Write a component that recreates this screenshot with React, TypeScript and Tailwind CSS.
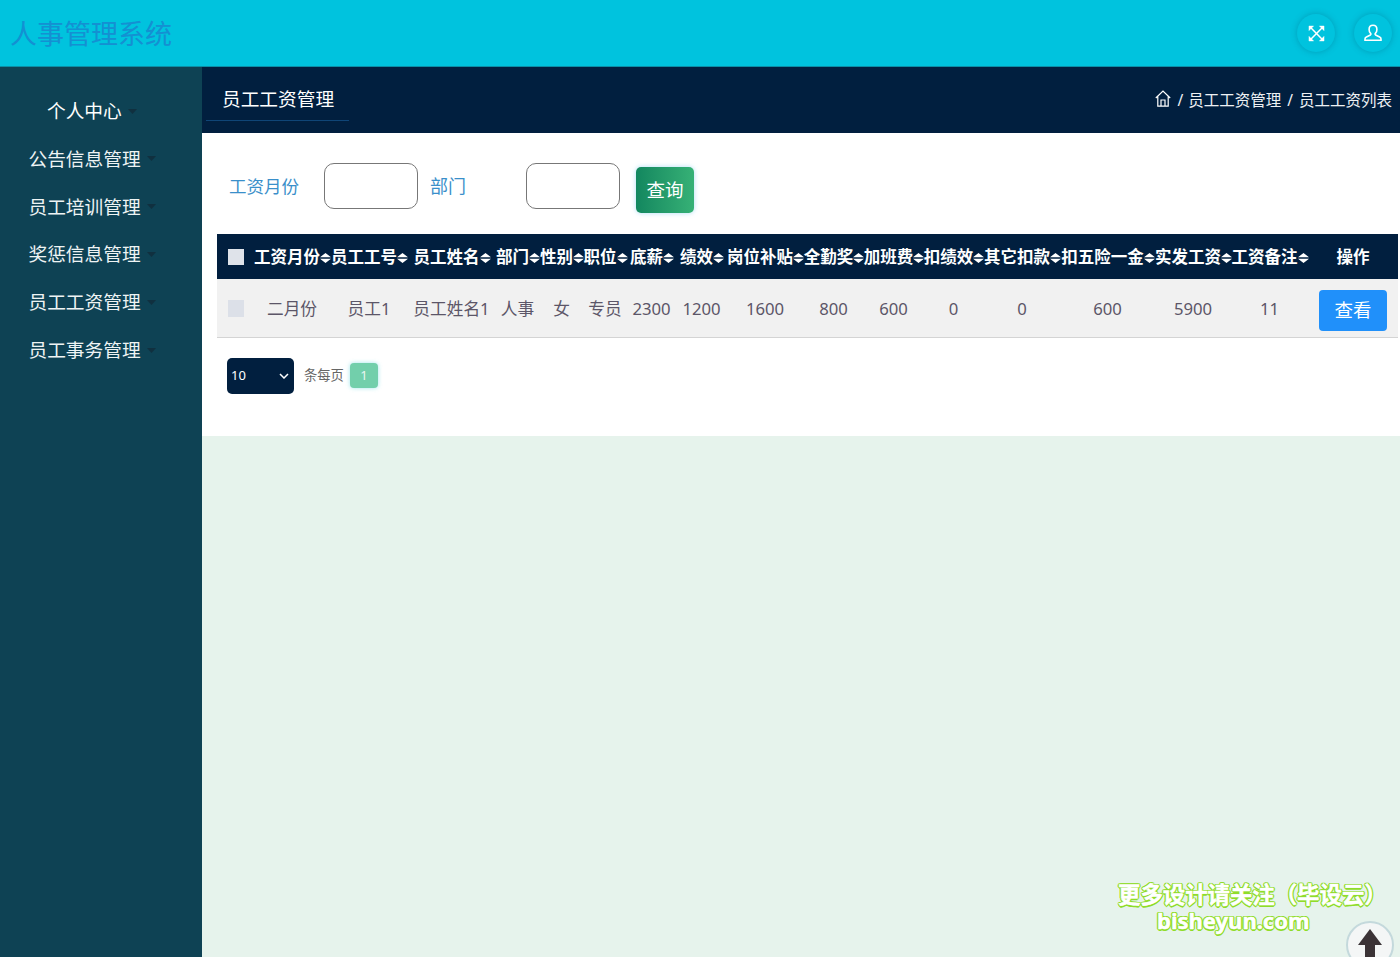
import type { ReactNode } from "react";

const font = "font-['Noto_Sans','Noto_Sans_CJK_SC',sans-serif]";

const menu = ["公告信息管理", "员工培训管理", "奖惩信息管理", "员工工资管理", "员工事务管理"];

const columns: { label: string; width: string; value: string }[] = [
  { label: "工资月份", width: "w-[77px]", value: "二月份" },
  { label: "员工工号", width: "w-[77px]", value: "员工1" },
  { label: "员工姓名", width: "w-[88px]", value: "员工姓名1" },
  { label: "部门", width: "w-[44px]", value: "人事" },
  { label: "性别", width: "w-[44px]", value: "女" },
  { label: "职位", width: "w-[43px]", value: "专员" },
  { label: "底薪", width: "w-[50px]", value: "2300" },
  { label: "绩效", width: "w-[50px]", value: "1200" },
  { label: "岗位补贴", width: "w-[77px]", value: "1600" },
  { label: "全勤奖", width: "w-[60px]", value: "800" },
  { label: "加班费", width: "w-[60px]", value: "600" },
  { label: "扣绩效", width: "w-[60px]", value: "0" },
  { label: "其它扣款", width: "w-[77px]", value: "0" },
  { label: "扣五险一金", width: "w-[94px]", value: "600" },
  { label: "实发工资", width: "w-[77px]", value: "5900" },
  { label: "工资备注", width: "w-[76px]", value: "11" },
];

function Caret() {
  return (
    <svg width="9" height="5" viewBox="0 0 9 5" className="ml-1.5 inline-block align-[3px]">
      <path d="M0 0h9L4.5 5z" fill="#10303f" />
    </svg>
  );
}

function SortIcon() {
  return (
    <svg width="11" height="10" viewBox="0 0 11 10" className="inline-block shrink-0">
      <path d="M5.5 0 11 4.2H0zM0 5.8h11L5.5 10z" fill="#fff" />
    </svg>
  );
}

function RoundIcon({ children }: { children: ReactNode }) {
  return (
    <div className="flex h-[38px] w-[38px] items-center justify-center rounded-full bg-[#00c3de] shadow-[0_0_6px_rgba(0,110,140,0.45)]">
      {children}
    </div>
  );
}

export default function App() {
  return (
    <div className={`${font} flex h-[957px] flex-col overflow-hidden bg-[#e6f3ec]`}>
      <header className="flex h-[67px] shrink-0 items-center justify-between border-b border-[#0a8fa6] bg-[#00c3de] pl-[10px] pr-[8px]">
        <h1 className="text-[27px] leading-none text-[#1490d2]">人事管理系统</h1>
        <div className="flex items-center gap-[19px]">
          <RoundIcon>
            <svg width="17" height="17" viewBox="0 0 18 18" fill="#fff" stroke="#fff" strokeWidth="1.6">
              <path d="M3 3l12 12M15 3 3 15" />
              <path d="M1 1h5L1 6zM17 1h-5l5 5zM17 17h-5l5-5zM1 17h5l-5-5z" strokeWidth="0.4" />
            </svg>
          </RoundIcon>
          <RoundIcon>
            <svg width="18" height="18" viewBox="0 0 18 18" fill="none" stroke="#fff" strokeWidth="1.6">
              <path d="M9 1.2c-2.5 0-3.9 1.8-3.9 4.2 0 1.9.7 3.2 1.5 4 .5.5.4 1.3-.2 1.6l-4 2c-.9.4-1.4 1-1.4 1.9v1.3h16v-1.3c0-.9-.5-1.5-1.4-1.9l-4-2c-.6-.3-.7-1.1-.2-1.6.8-.8 1.5-2.1 1.5-4 0-2.4-1.4-4.2-3.9-4.2z" />
            </svg>
          </RoundIcon>
        </div>
      </header>

      <div className="flex min-h-0 flex-1">
        <aside className="w-[202px] shrink-0 bg-[#0e4254] pt-[20px]">
          <div className="flex h-[48px] items-center pl-[47px] text-[18.7px] text-white">
            个人中心
            <Caret />
          </div>
          {menu.map((item) => (
            <div key={item} className="flex h-[47.8px] items-center pl-[28.5px] text-[18.7px] text-[#eef4f4]">
              {item}
              <Caret />
            </div>
          ))}
        </aside>

        <main className="min-w-0 flex-1">
          <div className="flex h-[66px] items-center justify-between bg-[#011f3f] pl-[4px] pr-[8px]">
            <div className="flex h-[42px] w-[143px] items-center border-b border-[#0f4577] pl-[16px] text-[18.7px] text-white">
              员工工资管理
            </div>
            <div className="flex items-center gap-[6px] text-[15.5px] text-[#eef1f4]">
              <svg width="16" height="17" viewBox="0 0 16 17" fill="none" stroke="#fff" strokeWidth="1.2" className="mb-[3px]">
                <path d="M.8 8 8 1l7.2 7M2.8 6.4v9.8h10.4V6.4M6 16.2V10h4v6.2" />
              </svg>
              <span className="mt-[2px]">/</span>
              <span className="mt-[2px] -ml-[1px]">员工工资管理</span>
              <span className="mt-[2px]">/</span>
              <span className="mt-[2px]">员工工资列表</span>
            </div>
          </div>

          <section className="h-[303px] bg-white pl-[15px] pr-[2px]">
            <div className="flex h-[101px] items-start pl-[12px] pt-[30px]">
              <label className="flex h-[46px] w-[95px] items-center text-[17.5px] text-[#3a8fca]">工资月份</label>
              <input className="h-[46px] w-[94px] rounded-[10px] border border-[#777] bg-white" />
              <label className="ml-[12px] flex h-[46px] w-[96px] items-center text-[18px] text-[#3a8fca]">部门</label>
              <input className="h-[46px] w-[94px] rounded-[10px] border border-[#777] bg-white" />
              <button className="ml-[16px] mt-[4px] h-[46px] w-[58px] rounded-[5px] bg-gradient-to-r from-[#12875f] to-[#36b176] text-[18.5px] text-white shadow-[0_0_5px_rgba(120,200,240,0.6)]">
                查询
              </button>
            </div>

            <table className="w-[1181px] table-fixed border-collapse">
              <colgroup>
                <col className="w-[37px]" />
                {columns.map((c) => (
                  <col key={c.label} className={c.width} />
                ))}
                <col className="w-[90px]" />
              </colgroup>
              <thead>
                <tr className="h-[45px] bg-[#011f3f] text-[16.5px] font-bold text-white">
                  <th className="pl-[11px] text-left">
                    <div className="h-[16px] w-[16px] bg-[#dfe3ea]" />
                  </th>
                  {columns.map((c) => (
                    <th key={c.label} className="p-0 pt-[2px] font-bold">
                      <span className="flex items-center justify-center whitespace-nowrap">
                        {c.label}
                        <SortIcon />
                      </span>
                    </th>
                  ))}
                  <th className="p-0 pt-[2px] font-bold">操作</th>
                </tr>
              </thead>
              <tbody>
                <tr className="h-[58px] border-b border-[#d4d4d4] bg-[#f1f1f1] text-[16.7px] text-[#5c5668]">
                  <td className="pl-[11px] pt-[1px]">
                    <div className="h-[17px] w-[16px] bg-[#dce0e8]" />
                  </td>
                  {columns.map((c) => (
                    <td key={c.label} className="whitespace-nowrap p-0 pr-[1px] pt-[2px] text-center">
                      {c.value}
                    </td>
                  ))}
                  <td className="p-0 pt-[5px] text-center">
                    <button className="h-[41px] w-[68px] rounded-[4px] bg-[#2090fa] text-[18.5px] text-white">查看</button>
                  </td>
                </tr>
              </tbody>
            </table>

            <div className="flex items-center pl-[10px] pt-[20px]">
              <div className="flex h-[36px] w-[67px] items-center justify-between rounded-[5px] bg-[#011f3f] pl-[4px] pr-[5px] text-[13px] text-white">
                10
                <svg width="10" height="6" viewBox="0 0 10 6" fill="none" stroke="#fff" strokeWidth="1.5">
                  <path d="M1 1l4 4 4-4" />
                </svg>
              </div>
              <span className="ml-[10px] text-[13.3px] text-[#666]">条每页</span>
              <div className="ml-[6px] flex h-[25px] w-[28px] items-center justify-center rounded-[4px] bg-[#72cfab] text-[13px] text-[#e8f7f1] shadow-[0_0_4px_rgba(120,220,230,0.7)]">
                1
              </div>
            </div>
          </section>
        </main>
      </div>

      <div className="absolute left-[1118px] top-[881px] font-bold text-white [-webkit-text-stroke:0.5px_#fff] [text-shadow:1.5px_0_#8fdc2a,-1.5px_0_#8fdc2a,0_1.5px_#8fdc2a,0_-1.5px_#8fdc2a,1px_1px_#8fdc2a,-1px_-1px_#8fdc2a,1px_-1px_#8fdc2a,-1px_1px_#8fdc2a]">
        <div className="whitespace-nowrap text-[22.4px] leading-[28px]">更多设计请关注（毕设云）</div>
        <div className="whitespace-nowrap pl-[39px] text-[22px] leading-[22px]">bisheyun.com</div>
      </div>

      <div className="absolute left-[1346px] top-[921px] h-[48px] w-[48px] rounded-full border-2 border-[#c4d9dc] bg-[#f4f6f6]">
        <svg width="24" height="37" viewBox="0 0 24 37" className="ml-[10px] mt-[6px]">
          <path d="M12 0 24 16H17V37H7V16H0z" fill="#3b3336" />
        </svg>
      </div>
    </div>
  );
}
